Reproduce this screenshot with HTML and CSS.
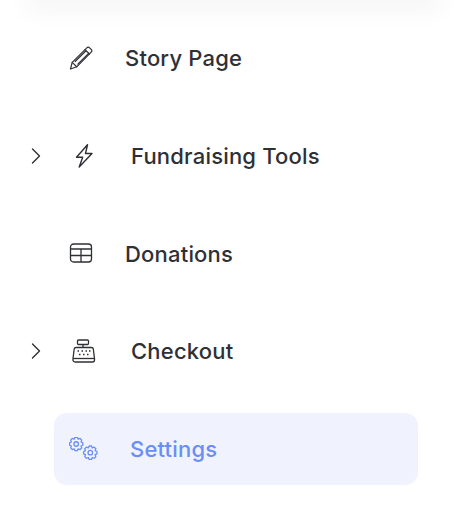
FILE: index.html
```html
<!DOCTYPE html>
<html lang="en">
<head>
<meta charset="utf-8">
<title>Menu</title>
<link rel="stylesheet" href="styles.css">
</head>
<body>
<div class="top-shadow"></div>
<nav class="menu">
  <div class="row">
    <span class="chev"></span>
    <a class="item">
      <svg class="icon" viewBox="0 0 24 24" fill="none" stroke="currentColor" stroke-width="1.200" stroke-linejoin="round" stroke-linecap="round"><path d="M1.500 23l1.700-6.600L17.800 1.800c.8-.8 2-.8 2.800 0l1.600 1.600c.8.8.8 2 0 2.800L7.700 20.800z"/><path d="M3.200 16.400l4.500 4.400M16 3.600l4.400 4.400M6.200 15.500L17.200 4.500M8.800 18.200L19.800 7.200"/></svg>
      <span class="label">Story Page</span>
    </a>
  </div>
  <div class="row sub">
    <span class="chev"><svg viewBox="0 0 10 16" fill="none" stroke="currentColor" stroke-width="1.400" stroke-linecap="round" stroke-linejoin="round"><path d="M1.500 1l7 7-7 7"/></svg></span>
    <a class="item">
      <svg class="icon" viewBox="0 0 24 24" fill="none" stroke="currentColor" stroke-width="1.400" stroke-linejoin="round"><path d="M15.500 .8L4.500 13.200h6.200L7.200 23 20 9.500h-6.500z"/></svg>
      <span class="label">Fundraising Tools</span>
    </a>
  </div>
  <div class="row">
    <span class="chev"></span>
    <a class="item">
      <svg class="icon" viewBox="0 0 24 24" fill="none" stroke="currentColor" stroke-width="1.300"><rect x="1.500" y="2" width="21" height="18" rx="3"/><path d="M1.500 7h21M1.500 13.500h21M12 7v13"/></svg>
      <span class="label">Donations</span>
    </a>
  </div>
  <div class="row sub">
    <span class="chev"><svg viewBox="0 0 10 16" fill="none" stroke="currentColor" stroke-width="1.400" stroke-linecap="round" stroke-linejoin="round"><path d="M1.500 1l7 7-7 7"/></svg></span>
    <a class="item">
      <svg class="icon" viewBox="0 0 24 24" fill="none" stroke="currentColor" stroke-width="1.300" stroke-linejoin="round"><rect x="5.500" y="1" width="11" height="4.500" rx="1"/><path d="M11 5.500v3"/><path d="M4 8.500h15.500c1 0 1.600.6 1.800 1.500l1.200 9.500v1.500c0 1-.8 2-2 2H3c-1.200 0-2-1-2-2v-1.500L2.200 10C2.400 9.100 3 8.500 4 8.500z"/><path d="M1 19.500h22"/><path stroke-width="1.500" d="M5.500 12h1.500M9.500 12H11M13.500 12H15M17 12h1.500M7 15.500h1.500M11 15.500h1.500M15 15.500h1.500"/></svg>
      <span class="label">Checkout</span>
    </a>
  </div>
  <div class="row">
    <span class="chev"></span>
    <a class="item active">
      <svg class="icon gears" viewBox="0 0 30 24" fill="none" stroke="currentColor" stroke-width="1.150" stroke-linejoin="round">
        <g transform="translate(7.200 7) scale(1.130)"><path d="M5.910-1.040L5.910 1.040L4.250 1.760L4.910 3.440L3.440 4.910L1.760 4.250L1.040 5.910L-1.040 5.910L-1.760 4.250L-3.440 4.910L-4.910 3.440L-4.250 1.760L-5.910 1.040L-5.910-1.040L-4.250-1.760L-4.910-3.440L-3.440-4.910L-1.760-4.250L-1.040-5.910L1.040-5.910L1.760-4.250L3.440-4.910L4.910-3.440L4.250-1.760Z"/><circle r="2"/></g>
        <g transform="translate(21.300 15.700) scale(1.130)"><path d="M5.910-1.040L5.910 1.040L4.250 1.760L4.910 3.440L3.440 4.910L1.760 4.250L1.040 5.910L-1.040 5.910L-1.760 4.250L-3.440 4.910L-4.910 3.440L-4.250 1.760L-5.910 1.040L-5.910-1.040L-4.250-1.760L-4.910-3.440L-3.440-4.910L-1.760-4.250L-1.040-5.910L1.040-5.910L1.760-4.250L3.440-4.910L4.910-3.440L4.250-1.760Z"/><circle r="2"/></g>
      </svg>
      <span class="label">Settings</span>
    </a>
  </div>
</nav>
</body>
</html>
```
FILE: styles.css
```css
html, body {
  margin: 0;
  padding: 0;
  height: 516px;
  overflow: hidden;
  background: #fff;
}
body {
  font-family: "Inter", "Noto Sans", sans-serif;
  color: #2f3036;
}
.top-shadow {
  height: 1px;
  margin: -1px 34px 0;
  box-shadow: 0 0 26px 8px rgba(0, 0, 0, 0.06);
}
.menu {
  display: flex;
  flex-direction: column;
  gap: 25.750px;
  padding-top: 22px;
}
.row {
  display: flex;
  align-items: center;
  height: 72px;
}
.chev {
  width: 54px;
  flex: none;
  display: flex;
  padding-left: 31px;
  box-sizing: border-box;
  color: #2f3036;
}
.chev svg {
  width: 10px;
  height: 16px;
}
.item {
  display: flex;
  align-items: center;
  width: 364px;
  height: 72px;
  padding-left: 15px;
  box-sizing: border-box;
  border-radius: 13px;
}
.icon {
  width: 24px;
  height: 24px;
  flex: none;
  margin-right: 32px;
}
.sub .icon {
  margin-left: 3px;
  margin-right: 35px;
}
.label {
  font-size: 22px;
  font-weight: 450;
  letter-spacing: 0.2px;
  white-space: nowrap;
}
.active {
  background: #f0f3fe;
  color: #6a8ef5;
}
.gears {
  width: 30px;
  height: 24px;
  margin-right: 31px;
}
```
